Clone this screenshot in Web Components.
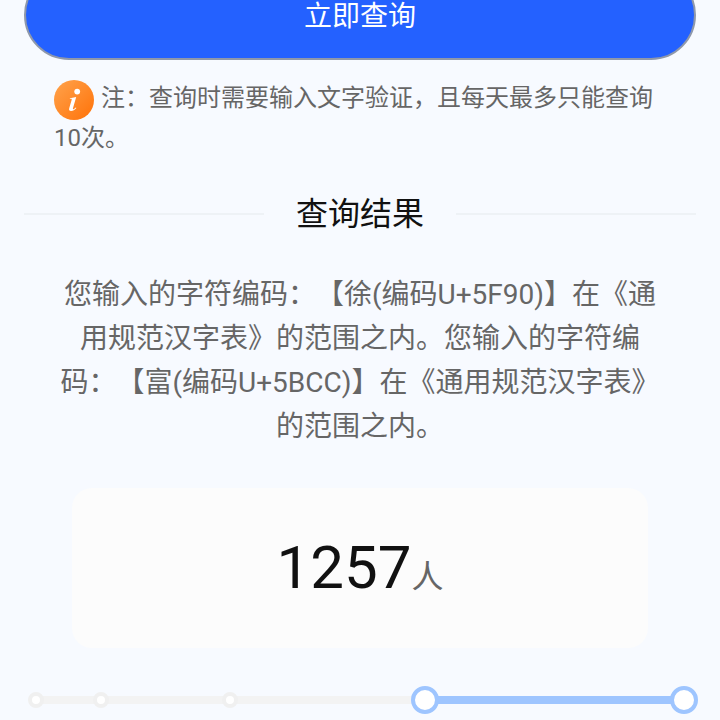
<!DOCTYPE html>
<html lang="zh">
<head>
<meta charset="utf-8">
<style>
html, body { margin: 0; height: 720px; overflow: hidden; background: #f7faff; }
body { font-family: Roboto, "Noto Sans CJK SC", sans-serif; text-spacing-trim: space-all; font-kerning: none; }
</style>
</head>
<body>
<query-page></query-page>
<script>
class QueryButton extends HTMLElement {
    constructor() {
        super();
        this.attachShadow({mode: "open"}).innerHTML = `
        <style>
        :host { display: block; margin: -30px 24px 0; }
        button {
            display: block;
            box-sizing: border-box;
            width: 100%;
            height: 90px;
            border: 2px solid #8f98aa;
            border-radius: 45px;
            background: #2461ff;
            color: #fff;
            font: 28px Roboto, "Noto Sans CJK SC", sans-serif;
            padding: 0 0 2px;
        }
        </style>
        <button><slot></slot></button>`;
    }
}

class NoteText extends HTMLElement {
    constructor() {
        super();
        this.attachShadow({mode: "open"}).innerHTML = `
        <style>
        :host { display: block; margin: 19px 54px 0; color: #666; font-size: 24px; line-height: 39.5px; }
        svg { width: 40px; height: 40px; vertical-align: top; margin: 1px 7px -1.5px 0; }
        </style>
        <svg viewBox="0 0 40 40">
            <defs><linearGradient id="g" x1="0" y1="0" x2="1" y2="1">
                <stop offset="0" stop-color="#ffa34d"/><stop offset="1" stop-color="#ff7208"/>
            </linearGradient></defs>
            <circle cx="20" cy="20" r="20" fill="url(#g)"/>
            <circle cx="23.2" cy="11.6" r="2.9" fill="#fff"/>
            <path d="M16 18.2l6.2-1.1-3.3 11.4c-.2.8.5 1 1.1.5l1.8-1.6.6.7c-1.7 2-3.4 3-5.3 3-1.8 0-2.4-1-1.9-2.8l2.5-8.6c.2-.7-.1-1-1-.9l-.9.1z" fill="#fff"/>
        </svg><slot></slot>`;
    }
}

class SectionTitle extends HTMLElement {
    constructor() {
        super();
        this.attachShadow({mode: "open"}).innerHTML = `
        <style>
        :host { display: flex; align-items: center; margin: 32px 24px 0; color: #111; font-size: 32px; line-height: 48px; }
        i { flex: 1; height: 2px; background: #eef2f6; }
        span { width: 192px; text-align: center; }
        </style>
        <i></i><span><slot></slot></span><i></i>`;
    }
}

class ResultText extends HTMLElement {
    constructor() {
        super();
        this.attachShadow({mode: "open"}).innerHTML = `
        <style>
        :host { display: block; margin: 35px 56px 0; color: #666; font-size: 28px; line-height: 44px; text-align: center; }
        </style>
        <slot></slot>`;
    }
}

class CountCard extends HTMLElement {
    constructor() {
        super();
        this.attachShadow({mode: "open"}).innerHTML = `
        <style>
        :host {
            display: flex; align-items: baseline; justify-content: center;
            box-sizing: border-box;
            height: 160px; margin: 39px 72px 0; padding-top: 40px;
            background: #fcfcfc; border-radius: 20px;
            color: #111; font-size: 60px; line-height: 80px;
        }
        span { color: #666; font-size: 32px; }
        </style>
        <slot></slot><span><slot name="unit"></slot></span>`;
    }
}

class RangeSlider extends HTMLElement {
    constructor() {
        super();
        const marks = [0, 10, 30].map(p => `<b style="left:${p}%"></b>`).join("");
        this.attachShadow({mode: "open"}).innerHTML = `
        <style>
        :host { display: block; position: relative; height: 8px; margin: 48px 36px 0; background: #f3f3f3; }
        div { position: absolute; left: 60%; right: 0; top: 0; bottom: 0; background: #9ec5ff; }
        b, u { position: absolute; box-sizing: border-box; border-radius: 50%; background: #fff; transform: translate(-50%, -50%); top: 50%; }
        b { width: 16px; height: 16px; border: 4px solid #f0f0f0; }
        u { width: 28px; height: 28px; border: 4px solid #9ec5ff; }
        </style>
        <div></div>${marks}<u style="left:60%"></u><u style="left:100%"></u>`;
    }
}

class QueryPage extends HTMLElement {
    constructor() {
        super();
        this.attachShadow({mode: "open"}).innerHTML = `
        <style>:host { display: block; }</style>
        <query-button>立即查询</query-button>
        <note-text>注：查询时需要输入文字验证，且每天最多只能查询10次。</note-text>
        <section-title>查询结果</section-title>
        <result-text>您输入的字符编码：【徐(编码U+5F90)】在《通用规范汉字表》的范围之内。您输入的字符编码：【富(编码U+5BCC)】在《通用规范汉字表》的范围之内。</result-text>
        <count-card>1257<span slot="unit">人</span></count-card>
        <range-slider></range-slider>`;
    }
}

customElements.define("query-button", QueryButton);
customElements.define("note-text", NoteText);
customElements.define("section-title", SectionTitle);
customElements.define("result-text", ResultText);
customElements.define("count-card", CountCard);
customElements.define("range-slider", RangeSlider);
customElements.define("query-page", QueryPage);
</script>
</body>
</html>
